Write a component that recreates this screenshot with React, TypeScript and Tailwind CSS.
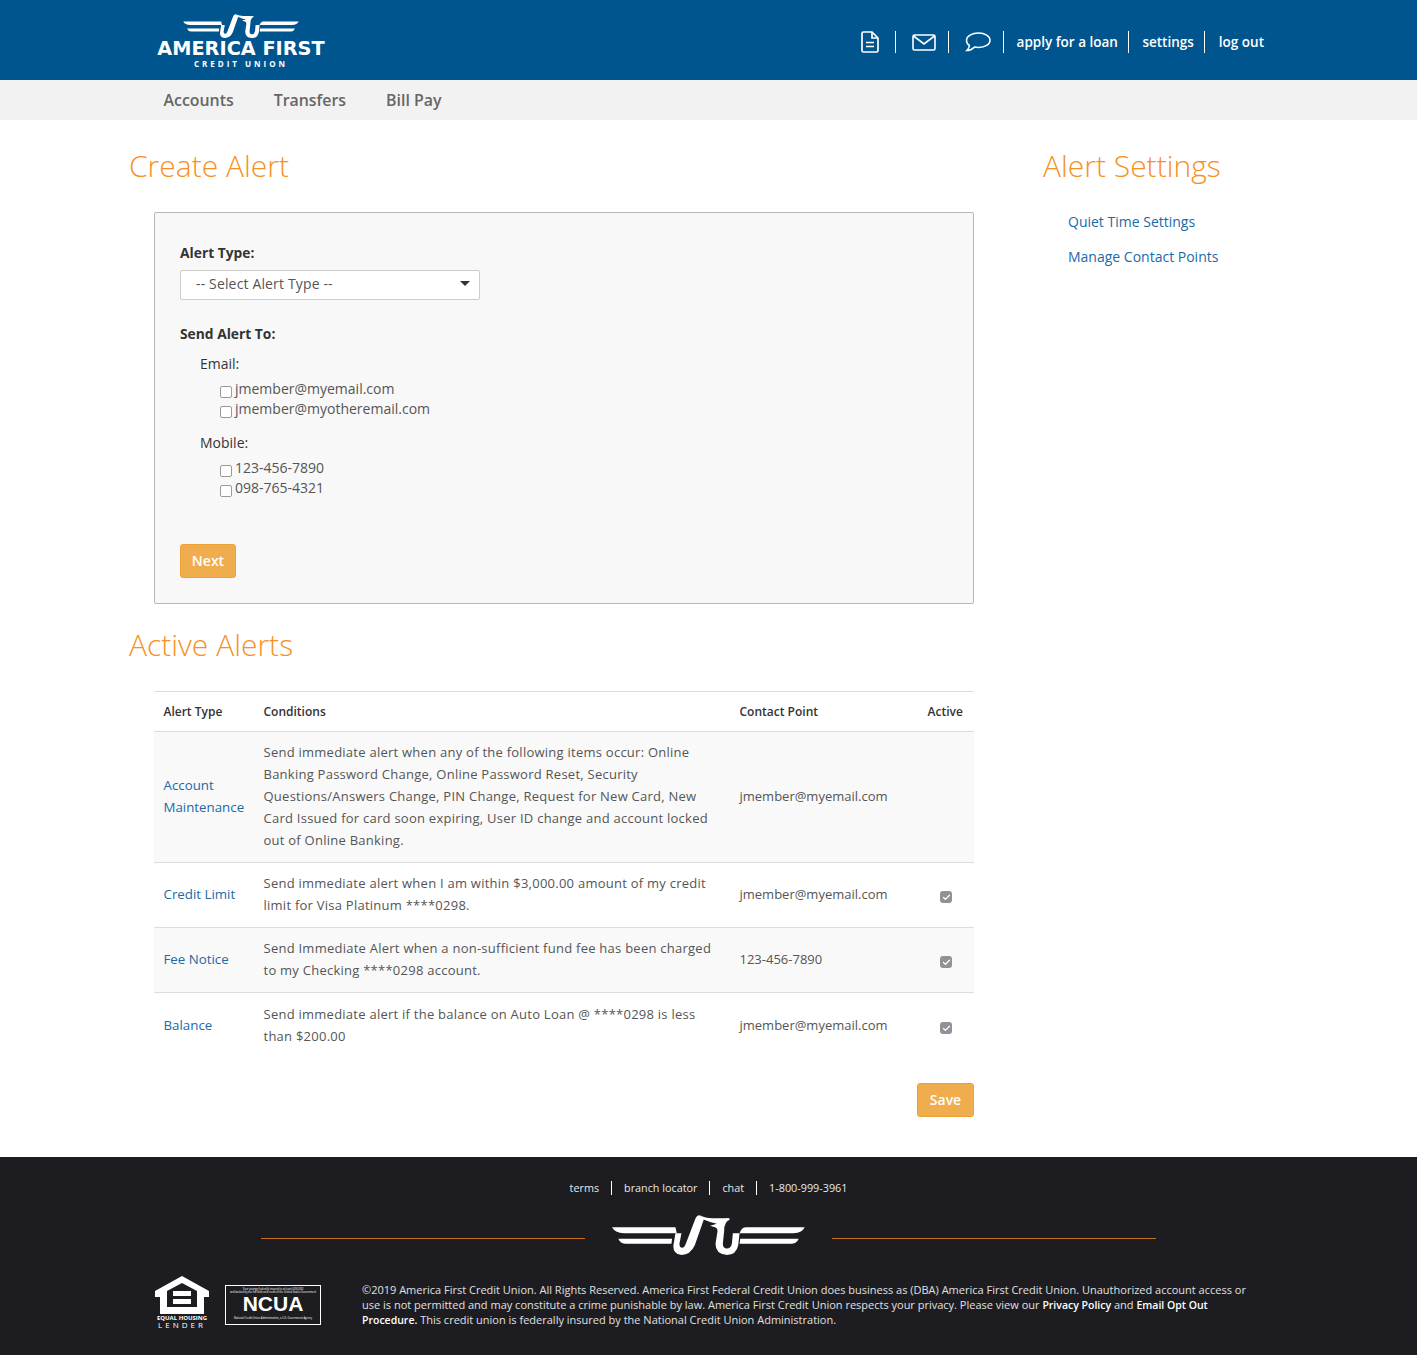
import { Check } from 'lucide-react';

const sans = { fontFamily: '"Open Sans", sans-serif' };

const EagleMark = ({ className }: { className: string }) => (
  <svg viewBox="30 130 590 125" className={className} fill="white">
    <path d="M36 172 H226 L230 190 H72 Q44 188 36 172 Z" />
    <path d="M55 207 H216 L214 222 H75 Q60 220 55 207 Z" />
    <path d="M613 172 H436 Q424 172 418 190 H580 Q606 188 613 172 Z" />
    <path d="M595 207 H420 L418 222 H575 Q590 220 595 207 Z" />
    {/* left loop and rising diagonal */}
    <path d="M226 190 H244 L238 222 Q238 234 246 234 Q253 234 257 222 L286 146 Q290 136 298 136 L312 146 L284 226 Q270 256 242 255 Q218 252 220 226 Z" />
    {/* head and hooked neck with right loop */}
    <path d="M300 136 Q316 146 340 145 H376 Q392 144 388 150 Q372 156 372 182 L368 222 Q368 236 380 236 Q392 236 395 222 L398 190 H418 L414 226 Q408 256 378 255 Q346 252 346 222 L352 184 Q352 174 344 172 L330 168 L350 162 Q330 158 312 150 Z" />
  </svg>
);

const DocIcon = () => (
  <svg viewBox="0 0 18 22" className="w-[18px] h-[22px]" fill="none" stroke="white" strokeWidth="1.7">
    <path d="M2.5 1 H11 L17 7 V19.5 Q17 21 15.5 21 H2.5 Q1 21 1 19.5 V2.5 Q1 1 2.5 1 Z" />
    <path d="M11 1 V7 H17" />
    <path d="M5 11.5 H13 M5 15.5 H13" />
  </svg>
);

const MailIcon = () => (
  <svg viewBox="0 0 24 17" className="w-6 h-[17px]" fill="none" stroke="white" strokeWidth="1.6">
    <rect x="1" y="1" width="22" height="15" rx="1.5" />
    <path d="M1.5 2 L12 10 L22.5 2" />
  </svg>
);

const BubbleIcon = () => (
  <svg viewBox="0 0 26 20" className="w-[26px] h-5" fill="none" stroke="white" strokeWidth="1.5">
    <path d="M13.5 1 C20 1 25 4 25 8.2 C25 12.5 20 15.5 13.5 15.5 C12 15.5 10.8 15.4 9.5 15.1 C7.5 17 4.5 18.5 1.8 18.5 C3.2 17.2 4.3 15.5 4.4 13.5 C2.4 12.2 1.5 10.3 1.5 8.2 C1.5 4 7 1 13.5 1 Z" />
  </svg>
);

const Header = () => (
  <header className="h-20 bg-[#00558f] flex items-start justify-between pl-[157px] pr-[153px]">
    <div className="w-[168px] flex flex-col items-center pt-[13px]">
      <EagleMark className="w-[118px] h-[25px]" />
      <div className="text-white text-[19.3px] leading-[20px] mt-[1px] font-bold whitespace-nowrap" style={{ fontFamily: '"DejaVu Sans", sans-serif' }}>
        AMERICA FIRST
      </div>
      <div className="text-white text-[8px] leading-[8px] font-bold tracking-[3px] mt-[1px] whitespace-nowrap" style={sans}>
        CREDIT UNION
      </div>
    </div>
    <nav className="flex items-center h-[84px] text-white text-[13.5px] font-semibold" style={sans}>
      <DocIcon />
      <span className="block w-px h-[22px] bg-white ml-4 mr-4" />
      <MailIcon />
      <span className="block w-px h-[22px] bg-white ml-3 mr-4" />
      <BubbleIcon />
      <span className="block w-px h-[22px] bg-white ml-3 mr-[13px]" />
      <span>apply for a loan</span>
      <span className="block w-px h-[22px] bg-white ml-[10px] mr-[13.5px]" />
      <span>settings</span>
      <span className="block w-px h-[22px] bg-white ml-[10px] mr-[14px]" />
      <span>log out</span>
    </nav>
  </header>
);

const SubNav = () => (
  <div className="h-10 bg-[#f2f2f2] flex items-center gap-10 pl-[163.5px] pt-[2px] text-[15.9px] font-semibold text-[#666666]" style={sans}>
    <span>Accounts</span>
    <span>Transfers</span>
    <span>Bill Pay</span>
  </div>
);

const Option = ({ label }: { label: string }) => (
  <label className="flex items-center h-5 text-sm text-[#555555]">
    <input type="checkbox" className="appearance-none w-3 h-3 mt-[5px] mr-[3px] bg-white border border-[#9a9a9a] rounded-[2px]" />
    {label}
  </label>
);

const CreateForm = () => (
  <div className="mt-[26px] ml-[25px] w-[820px] h-[392px] bg-[#f8f8f8] border border-[#b8b8b8] rounded-[2px] pt-[30px] pl-[25px]">
    <div className="text-[13.8px] leading-5 font-bold text-[#333333]">Alert Type:</div>
    <div className="relative w-[300px] h-[30px] mt-[7px]">
      <select className="appearance-none w-full h-full bg-white border border-[#cccccc] rounded-[2px] pl-[15px] pb-[2px] text-sm tracking-[0.15px] text-[#555555]">
        <option>-- Select Alert Type --</option>
      </select>
      <span className="absolute right-[10px] top-[11px] border-x-[5px] border-x-transparent border-t-[5px] border-t-[#333333]" />
    </div>
    <div className="mt-6 text-[13.8px] leading-5 font-bold text-[#333333]">Send Alert To:</div>
    <div className="ml-5 mt-[10px] text-sm leading-5 text-[#333333]">Email:</div>
    <div className="ml-10 mt-[5px]">
      <Option label="jmember@myemail.com" />
      <Option label="jmember@myotheremail.com" />
    </div>
    <div className="ml-5 mt-[14px] text-sm leading-5 text-[#333333]">Mobile:</div>
    <div className="ml-10 mt-[5px]">
      <Option label="123-456-7890" />
      <Option label="098-765-4321" />
    </div>
    <button className="mt-[46px] w-14 h-[34px] bg-[#f0ad4e] border border-[#eea236] rounded-[3px] text-white text-sm font-semibold">Next</button>
  </div>
);

const rows = [
  {
    type: 'Account Maintenance',
    conditions:
      'Send immediate alert when any of the following items occur: Online Banking Password Change, Online Password Reset, Security Questions/Answers Change, PIN Change, Request for New Card, New Card Issued for card soon expiring, User ID change and account locked out of Online Banking.',
    contact: 'jmember@myemail.com',
    active: false,
  },
  {
    type: 'Credit Limit',
    conditions: 'Send immediate alert when I am within $3,000.00 amount of my credit limit for Visa Platinum ****0298.',
    contact: 'jmember@myemail.com',
    active: true,
  },
  {
    type: 'Fee Notice',
    conditions: 'Send Immediate Alert when a non-sufficient fund fee has been charged to my Checking ****0298 account.',
    contact: '123-456-7890',
    active: true,
  },
  {
    type: 'Balance',
    conditions: 'Send immediate alert if the balance on Auto Loan @ ****0298 is less than $200.00',
    contact: 'jmember@myemail.com',
    active: true,
  },
];

const ActiveTable = () => (
  <table className="mt-[26px] ml-[25px] w-[820px] table-fixed border-collapse text-[13px] text-[#555555]">
    <colgroup>
      <col className="w-[100px]" />
      <col className="w-[476px]" />
      <col className="w-[178px]" />
      <col className="w-[66px]" />
    </colgroup>
    <thead>
      <tr className="h-10 border-y border-[#dddddd] text-xs text-[#333333] text-left">
        <th className="pl-[9.5px] font-semibold">Alert Type</th>
        <th className="pl-[9.5px] font-semibold">Conditions</th>
        <th className="pl-[9.5px] font-semibold">Contact Point</th>
        <th className="pl-[19.5px] font-semibold">Active</th>
      </tr>
    </thead>
    <tbody>
      {rows.map((row, i) => {
        const last = i === rows.length - 1;
        return (
          <tr key={row.type} className={`border-b border-[#dddddd] last:border-b-0 ${i === 0 || i === 2 ? 'bg-[#f9f9f9]' : ''}`}>
            <td className={`pl-[9.5px] pr-2 leading-[22px] text-[13.3px] text-[#1a6aa8] ${last ? '' : 'pb-[2px]'}`}>{row.type}</td>
            <td className={`pl-[9.5px] pr-3 leading-[22px] tracking-[0.25px] ${last ? 'py-[10px]' : 'pt-[9px] pb-[11px]'}`}>{row.conditions}</td>
            <td className={`pl-[9.5px] leading-[22px] ${last ? '' : 'pb-[2px]'}`}>{row.contact}</td>
            <td>
              {row.active && (
                <span className={`flex items-center justify-center w-3 h-3 ml-[32px] rounded-[3px] bg-[#8f9296] ${last ? 'mt-[6px]' : 'mt-1'}`}>
                  <Check size={9} strokeWidth={3.5} color="white" />
                </span>
              )}
            </td>
          </tr>
        );
      })}
    </tbody>
  </table>
);

const Footer = () => (
  <footer className="h-[198px] bg-[#1d1d21] pt-[23px] text-[#e8e8e8]" style={sans}>
    <div className="flex justify-center items-center h-4 text-[10.8px] font-medium">
      <span>terms</span>
      <span className="w-px h-[14px] bg-white mx-3" />
      <span>branch locator</span>
      <span className="w-px h-[14px] bg-white mx-3" />
      <span>chat</span>
      <span className="w-px h-[14px] bg-white mx-3" />
      <span>1-800-999-3961</span>
    </div>
    <div className="flex justify-center items-start gap-[25px] mt-[17px]">
      <span className="w-[324px] h-px mt-[25px] bg-[#c8701e]" />
      <EagleMark className="w-[197px] h-[42px]" />
      <span className="w-[324px] h-px mt-[25px] bg-[#c8701e]" />
    </div>
    <div className="flex mt-[21px] pl-[155px]">
      <div className="w-[54px] flex flex-col items-center text-white">
        <svg viewBox="0 0 54 38" className="w-[54px] h-[38px]" fill="white">
          <path d="M27 0 L54 15 V21 H49 V38 H5 V21 H0 V15 Z M27 7 L12 15 V31 H42 V15 Z" fillRule="evenodd" />
          <rect x="18" y="15" width="18" height="5" />
          <rect x="18" y="23" width="18" height="5" />
        </svg>
        <div className="text-[6px] leading-[7px] font-bold mt-[1px] whitespace-nowrap">EQUAL HOUSING</div>
        <div className="text-[8px] leading-[6px] tracking-[3px] whitespace-nowrap">LENDER</div>
      </div>
      <div className="w-[96px] h-10 ml-4 mt-[9px] border border-white flex flex-col items-center text-white">
        <div className="text-[2.6px] leading-[3px] mt-[2px] whitespace-nowrap">Your savings federally insured to at least $250,000</div>
        <div className="text-[2.6px] leading-[3px] whitespace-nowrap">and backed by the full faith and credit of the United States Government</div>
        <div className="text-[21px] leading-[20px] font-bold" style={{ fontFamily: '"Liberation Sans", sans-serif' }}>NCUA</div>
        <div className="text-[2.6px] leading-[3px] mt-[3px] whitespace-nowrap">National Credit Union Administration, a U.S. Government Agency</div>
      </div>
      <p className="w-[890px] ml-[41px] mt-[6px] text-[11px] leading-[15px] font-medium text-[#e0e0e0]">
        ©2019 America First Credit Union. All Rights Reserved. America First Federal Credit Union does business as (DBA) America First Credit Union. Unauthorized account access or use is not permitted and may constitute a crime punishable by law. America First Credit Union respects your privacy. Please view our <b className="text-white text-[10.5px] leading-none font-semibold">Privacy Policy</b> and <b className="text-white text-[10.5px] leading-none font-semibold">Email Opt Out</b> <b className="text-white text-[10.5px] leading-none font-semibold">Procedure.</b> This credit union is federally insured by the National Credit Union Administration.
      </p>
    </div>
  </footer>
);

const App = () => (
  <div className="min-h-[1355px] bg-white" style={sans}>
    <Header />
    <SubNav />
    <main className="flex h-[1037px] pl-[129px] pt-[26px]">
      <div className="w-[914px]">
        <h1 className="text-[30px] leading-[40px] font-[350] text-[#f7901e]">Create Alert</h1>
        <CreateForm />
        <h1 className="mt-[21px] text-[30px] leading-[40px] font-[350] text-[#f7901e]">Active Alerts</h1>
        <ActiveTable />
        <div className="flex justify-end w-[845px] mt-[26px]">
          <button className="w-[57px] h-[34px] bg-[#f0ad4e] border border-[#eea236] rounded-[3px] text-white text-sm font-semibold">Save</button>
        </div>
      </div>
      <aside>
        <h1 className="text-[30px] leading-[40px] font-[350] text-[#f7901e]">Alert Settings</h1>
        <div className="ml-[25px] mt-[25px] flex flex-col gap-[13px] text-sm leading-[22px] text-[#1a6aa8]">
          <span>Quiet Time Settings</span>
          <span>Manage Contact Points</span>
        </div>
      </aside>
    </main>
    <Footer />
  </div>
);

export default App;
